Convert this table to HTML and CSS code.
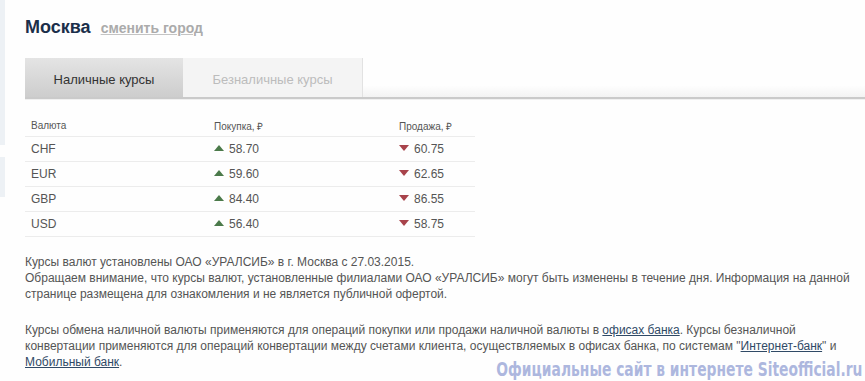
FILE: index.html
```html
<!DOCTYPE html>
<html lang="ru">
<head>
<meta charset="utf-8">
<title>Курсы валют</title>
<link rel="stylesheet" href="styles.css">
</head>
<body>
<div class="page">
  <div class="side">
    <div class="side-block side-block-1"></div>
    <div class="side-block side-block-2"></div>
  </div>
  <div class="main">
    <div class="city">
      <h1 class="city-name">Москва</h1>
      <a class="city-change" href="#">сменить город</a>
    </div>
    <div class="tabs">
      <div class="tab tab-active">Наличные курсы</div>
      <div class="tab tab-inactive">Безналичные курсы</div>
      <div class="tab-rest"></div>
    </div>
    <table class="rates">
      <thead>
        <tr><th class="c1">Валюта</th><th class="c2">Покупка, ₽</th><th class="c3">Продажа, ₽</th></tr>
      </thead>
      <tbody>
        <tr><td>CHF</td><td><span class="up"></span>58.70</td><td><span class="down"></span>60.75</td></tr>
        <tr><td>EUR</td><td><span class="up"></span>59.60</td><td><span class="down"></span>62.65</td></tr>
        <tr><td>GBP</td><td><span class="up"></span>84.40</td><td><span class="down"></span>86.55</td></tr>
        <tr><td>USD</td><td><span class="up"></span>56.40</td><td><span class="down"></span>58.75</td></tr>
      </tbody>
    </table>
    <p class="note">Курсы валют установлены ОАО «УРАЛСИБ» в г. Москва с 27.03.2015.<br>Обращаем внимание, что курсы валют, установленные филиалами ОАО «УРАЛСИБ» могут быть изменены в течение дня. Информация на данной странице размещена для ознакомления и не является публичной офертой.</p>
    <p class="note note-2">Курсы обмена наличной валюты применяются для операций покупки или продажи наличной валюты в <a href="#">офисах банка</a>. Курсы безналичной конвертации применяются для операций конвертации между счетами клиента, осуществляемых в офисах банка, по системам "<a href="#">Интернет-банк</a>" и <a href="#">Мобильный банк</a>.</p>
  </div>
</div>
<div class="watermark">Официальные сайт в интернете Siteofficial.ru</div>
</body>
</html>
```

FILE: styles.css
```css
html, body {
  margin: 0;
  padding: 0;
  background: #fefefe;
}
body {
  font-family: "Liberation Sans", Arial, sans-serif;
  color: #555;
  overflow: hidden;
}
.page {
  display: flex;
  min-height: 381px;
}
.side {
  width: 5px;
  flex: none;
  display: flex;
  flex-direction: column;
}
.side-block {
  background: #edf1f5;
}
.side-block-1 {
  height: 145px;
}
.side-block-2 {
  height: 40px;
  margin-top: 12px;
}
.main {
  flex: 1;
  padding: 16px 0 0 20px;
  min-width: 0;
}
.city {
  display: flex;
  align-items: baseline;
  gap: 10px;
  height: 22px;
}
.city-name {
  margin: 0;
  font-size: 18px;
  line-height: 22px;
  font-weight: bold;
  color: #1b2f4a;
}
.city-change {
  font-size: 14px;
  font-weight: bold;
  color: #ababab;
  text-decoration: underline;
  text-decoration-color: #c4c4c4;
}
.tabs {
  display: flex;
  margin-top: 20px;
  border-bottom: 2px solid #cacaca;
  box-shadow: 0 1px 0 #f0f0f0;
}
.tab {
  height: 39px;
  box-sizing: border-box;
  padding-top: 14px;
  font-size: 13px;
  text-align: center;
}
.tab-active {
  width: 158px;
  background: linear-gradient(#e4e4e4, #cdcdcd);
  color: #333;
}
.tab-inactive {
  width: 180px;
  background: #f4f4f4;
  border-right: 1px solid #e2e2e2;
  color: #bcbcbc;
}
.tab-rest {
  flex: 1;
  background: linear-gradient(#fefefe 70%, #f3f3f3);
}
.rates {
  margin-top: 16px;
  width: 450px;
  border-collapse: collapse;
}
.rates th {
  font-size: 10px;
  font-weight: normal;
  color: #555;
  text-align: left;
  height: 21px;
  padding: 0 0 0 6px;
  border-bottom: 1px solid #ececec;
}
.rates th.c1 { width: 177px; }
.rates th.c2 { width: 179px; }
.rates td {
  font-size: 12px;
  height: 24px;
  padding: 0 0 0 6px;
  border-bottom: 1px solid #ececec;
  color: #555;
}
.up, .down {
  display: inline-block;
  width: 0;
  height: 0;
  border-left: 5px solid transparent;
  border-right: 5px solid transparent;
  margin-right: 5px;
  vertical-align: 2px;
}
.up {
  border-bottom: 6px solid #4b7a4a;
}
.down {
  border-top: 6px solid #a8434b;
}
.note {
  margin: 17px 0 0 0;
  width: 840px;
  font-size: 12px;
  line-height: 16px;
  color: #555;
}
.note-2 {
  margin-top: 20px;
}
.note a {
  color: #304a66;
  text-decoration: underline;
}
.watermark {
  position: absolute;
  right: 3px;
  top: 359px;
  font-family: "DejaVu Sans Condensed", "Liberation Sans", sans-serif;
  font-weight: bold;
  font-size: 20px;
  line-height: 20px;
  color: #adb7de;
  white-space: nowrap;
  transform-origin: right top;
  transform: scaleX(0.77);
}
```
